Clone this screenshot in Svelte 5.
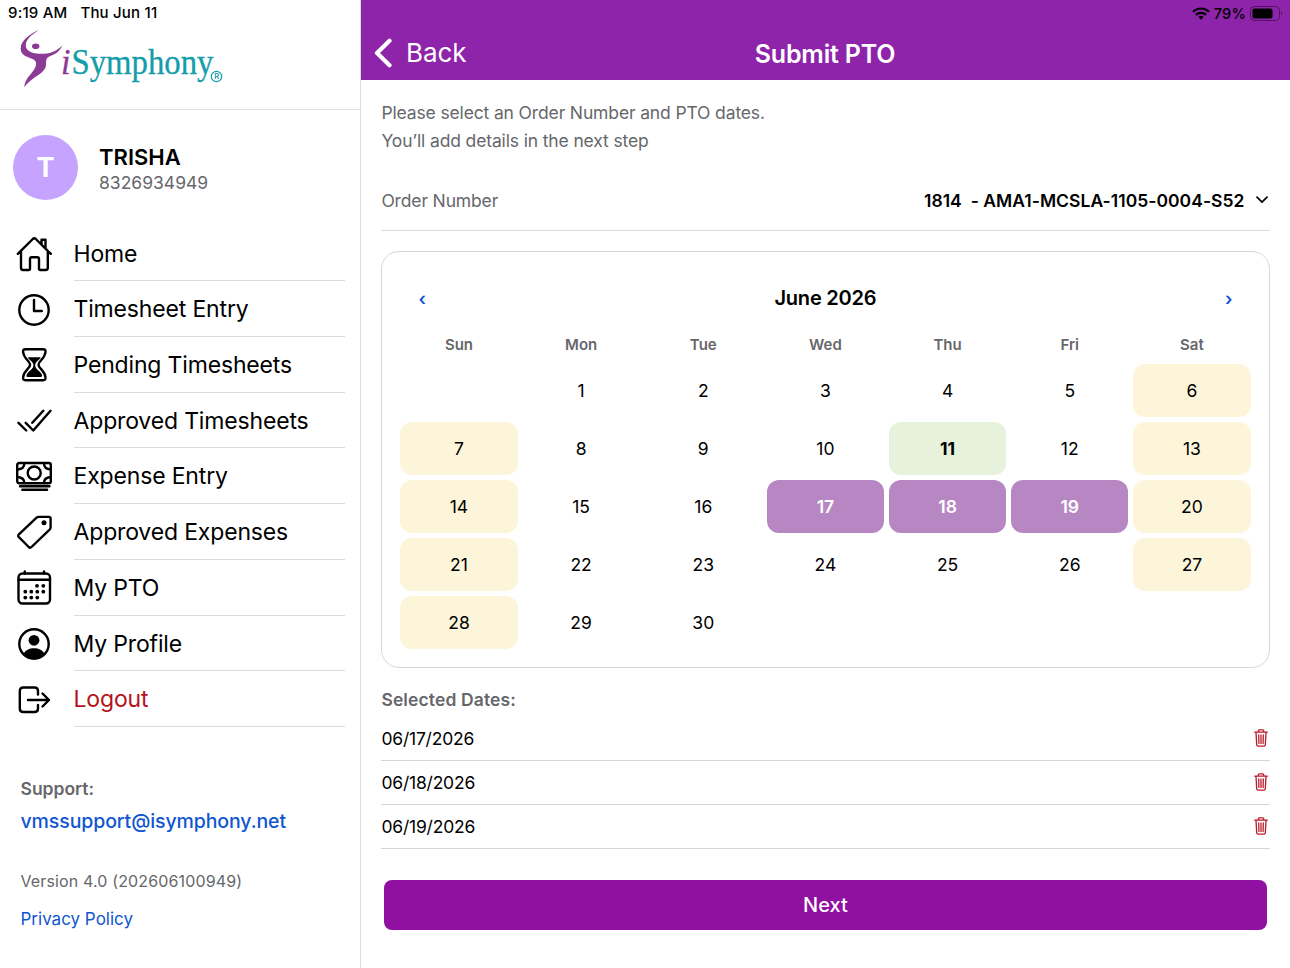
<!--
  Submit PTO – sidebar navigation, month calendar and selected dates.
-->
<script lang="ts">
  const menu = [
    { label: 'Home', icon: 'home' },
    { label: 'Timesheet Entry', icon: 'clock' },
    { label: 'Pending Timesheets', icon: 'hourglass' },
    { label: 'Approved Timesheets', icon: 'checks' },
    { label: 'Expense Entry', icon: 'cash' },
    { label: 'Approved Expenses', icon: 'tag' },
    { label: 'My PTO', icon: 'calendar' },
    { label: 'My Profile', icon: 'profile' },
    { label: 'Logout', icon: 'logout' },
  ];

  const weekdays = ['Sun', 'Mon', 'Tue', 'Wed', 'Thu', 'Fri', 'Sat'];
  const today = 11;
  const firstWeekday = 1;
  const days = Array.from({ length: 30 }, (_, i) => i + 1);

  let selected = $state([17, 18, 19]);

  function isWeekend(day: number) {
    const col = (day - 1 + firstWeekday) % 7;
    return col === 0 || col === 6;
  }

  function toggle(day: number) {
    if (isWeekend(day)) return;
    selected = selected.includes(day)
      ? selected.filter((d) => d !== day)
      : [...selected, day].sort((a, b) => a - b);
  }

  const format = (day: number) => `06/${String(day).padStart(2, '0')}/2026`;
</script>

<div class="app">
  <aside class="sidebar">
    <div class="brand">
      <div class="status"><span>9:19 AM</span><span>Thu Jun 11</span></div>
      <svg class="logo" width="204" height="60" viewBox="0 0 204 60">
        <path fill="#8b3a96" d="M19.3.8C9 5.5.7 12 .7 19.3c0 5 3 7 6.300 8.500 4 1.700 7.800 2.400 8.800 5.200 1 3-.6 6.300-3.300 9.800C9 47.500 4.800 51 4.300 58.300 6.500 55 9 53 12 50.500c5-4 10.500-6.500 13-11 2.300-4-.3-8.500 3-11.200C31 25.800 38 26 42.700 16c-5 5.500-11.200 8.300-18.500 8.800-8 .4-18-1-18.400-8C5.500 11 11 6 19.300.8z"/>
        <ellipse cx="15.700" cy="17.300" rx="3.700" ry="2.800" fill="#8b3a96"/>
        <text x="41" y="44.800" class="logo-i" textLength="9.500" lengthAdjust="spacingAndGlyphs">i</text>
        <text x="51.500" y="44.800" class="logo-name" textLength="142" lengthAdjust="spacingAndGlyphs">Symphony</text>
        <circle cx="196.500" cy="47.500" r="5.200" fill="#fff" stroke="#149daa" stroke-width="1.200"/>
        <text x="194.200" y="50.200" class="logo-r">R</text>
      </svg>
    </div>

    <div class="user">
      <div class="avatar">T</div>
      <div>
        <div class="name">TRISHA</div>
        <div class="phone">8326934949</div>
      </div>
    </div>

    <nav>
      {#each menu as item}
        <a class="item" class:logout={item.icon === 'logout'} href="#{item.icon}">
          <svg class="icon" width="36" height="36" viewBox="0 0 36 36">
            {#if item.icon === 'home'}
              <path d="M1.800 17.800 16.800 3q1.500-1.300 3 0l15 14.800M5 15v16.800Q5 34 7 34h5.800q1.200 0 1.200-1.500V23q0-1.800 1.800-1.800h5.400Q23 21.200 23 23v9.500q0 1.500 1.200 1.500h5.600q2 0 2-2.200V15M25.500 8V3.700h4v8.500"/>
            {:else if item.icon === 'clock'}
              <circle cx="18" cy="18" r="14.700"/>
              <path d="M18 8v11h7.800"/>
            {:else if item.icon === 'hourglass'}
              <path d="M9.500 2.200h17.600q2.800 0 2.400 2.800c-.7 7.200-7 8.800-7 12.700s6.300 5.500 7 12.700q.4 2.900-2.400 2.900H9.500q-2.800 0-2.400-2.900c.7-7.200 7-8.800 7-12.700S7.800 12.200 7.100 5q-.4-2.800 2.400-2.800z"/>
              <path class="solid" d="M12.800 10.300h11c.7 0 .9.600.4 1.200-2 2.300-5 3.700-5 6.500 0 4.200 4 5.300 6.200 8.700 1.500 2.400.5 3.300-.9 3.300H12.100c-1.400 0-2.400-.9-.9-3.300 2.200-3.400 6.200-4.500 6.200-8.700 0-2.800-3-4.200-5-6.500-.5-.6-.3-1.200.4-1.200z"/>
            {:else if item.icon === 'checks'}
              <path d="m2.500 19.800 7.700 7.700M9.700 19.800l7.600 7.700L34.500 7.800M16.300 19.800l11-12"/>
            {:else if item.icon === 'cash'}
              <rect x="1.200" y="4" width="33.600" height="20.200" rx="2"/>
              <circle cx="18.200" cy="14" r="6.500"/>
              <path d="M1.500 10.500Q8.300 10 8.300 4.500M28 4.500q0 5.500 6.700 6M1.500 18q6.800.5 6.800 6M28 24q0-5.500 6.700-6"/>
              <path d="M4 27.300h29.500M6.300 30.800h24.800"/>
            {:else if item.icon === 'tag'}
              <path d="M22.800 2.900h10q1.800 0 1.800 1.800v8.500q0 1.500-1 2.500L15.500 33q-1.400 1.300-2.800 0L2.900 23.200q-1.400-1.400 0-2.800L20.300 3.900q1-1 2.500-1z"/>
              <circle class="solid" cx="28" cy="8.800" r="2.500"/>
            {:else if item.icon === 'calendar'}
              <rect x="2.500" y="3.500" width="31.500" height="30" rx="4"/>
              <path d="M8.800 1.500v2M28 1.500v2M2.500 9.800H34"/>
              <g class="solid">
                {#each [[21, 15.8], [27.3, 15.8], [9.3, 21.7], [15.3, 21.7], [21.3, 21.7], [27.3, 21.7], [9.3, 27.6], [15.3, 27.6], [21.3, 27.6]] as [x, y]}
                  <circle cx={x} cy={y} r="1.900"/>
                {/each}
              </g>
            {:else if item.icon === 'profile'}
              <circle cx="18" cy="18" r="14.700"/>
              <circle class="solid" cx="18" cy="14.300" r="5.400"/>
              <path class="solid" d="M7.500 28c1.500-4 6-5.800 10.500-5.800S27 24 28.500 28C26 31 22 32.700 18 32.700S10 31 7.500 28z"/>
            {:else}
              <path d="M22 12.500V9q0-3.500-3.500-3.500H7.300Q3.800 5.500 3.800 9v17.500q0 3.500 3.500 3.500h11.200q3.500 0 3.500-3.500V23M12 18h21M26.500 11.500 33 18l-6.500 6.500"/>
            {/if}
          </svg>
          <span class="label">{item.label}</span>
        </a>
      {/each}
    </nav>

    <footer>
      <div class="support">Support:</div>
      <a class="mail" href="mailto:vmssupport@isymphony.net">vmssupport@isymphony.net</a>
      <div class="version">Version 4.0 (202606100949)</div>
      <a class="privacy" href="#privacy">Privacy Policy</a>
    </footer>
  </aside>

  <main>
    <header>
      <div class="device">
        <svg width="18" height="13" viewBox="0 0 18 13" fill="none" stroke="#000" stroke-width="2.200">
          <path d="M1 4.800a11.300 11.300 0 0 1 16 0M3.900 7.900a7.200 7.200 0 0 1 10.200 0"/>
          <path d="m9 12.700-2.500-2.600a3.500 3.500 0 0 1 5 0z" fill="#000" stroke="none"/>
        </svg>
        <span>79%</span>
        <svg width="34" height="15" viewBox="0 0 34 15">
          <rect x=".5" y=".5" width="29" height="14" rx="4" fill="none" stroke="#000" stroke-opacity=".42"/>
          <rect x="2.500" y="2.500" width="20" height="10" rx="2"/>
          <path d="M31 5.300q2.500 2.200 0 4.400z" opacity=".42"/>
        </svg>
      </div>
      <div class="bar">
        <button class="back">
          <svg width="18" height="30" viewBox="0 0 18 30" fill="none" stroke="#fff" stroke-width="4.200" stroke-linecap="round" stroke-linejoin="round">
            <path d="M15.500 2.700 3 15l12.500 12.300"/>
          </svg>
          <span>Back</span>
        </button>
        <h1>Submit PTO</h1>
      </div>
    </header>

    <div class="content">
      <p class="intro">Please select an Order Number and PTO dates.<br>You’ll add details in the next step</p>

      <div class="order">
        <span class="order-label">Order Number</span>
        <span class="order-value">1814 &nbsp;- AMA1-MCSLA-1105-0004-S52</span>
        <svg width="12" height="8" viewBox="0 0 12 8" fill="none" stroke="#000" stroke-width="1.700" stroke-linecap="round" stroke-linejoin="round">
          <path d="m1 1.200 5 5 5-5"/>
        </svg>
      </div>

      <section class="calendar">
        <div class="month">
          <button aria-label="Previous month">‹</button>
          <h2>June 2026</h2>
          <button aria-label="Next month">›</button>
        </div>
        <div class="weekdays">
          {#each weekdays as name}<span>{name}</span>{/each}
        </div>
        <div class="days">
          <span></span>
          {#each days as day}
            <button
              class="day"
              class:weekend={isWeekend(day)}
              class:today={day === today}
              class:selected={selected.includes(day)}
              onclick={() => toggle(day)}
            >{day}</button>
          {/each}
        </div>
      </section>

      <h3>Selected Dates:</h3>
      {#each selected as day (day)}
        <div class="date-row">
          <span>{format(day)}</span>
          <button aria-label="Remove date" onclick={() => toggle(day)}>
            <svg width="14" height="18" viewBox="0 0 14 18" fill="none" stroke="#b71c2c" stroke-width="1.300" stroke-linecap="round" stroke-linejoin="round">
              <path d="M.7 3.200h12.600M4.300 3V1.700q0-.9.900-.9h3.600q.9 0 .9.900V3M2 3.400l.7 12.400q.1 1.300 1.300 1.300h6q1.200 0 1.300-1.300L12 3.400M4.700 6l.2 8.500M7 6v8.500M9.300 6l-.2 8.500"/>
            </svg>
          </button>
        </div>
      {/each}

      <button class="next">Next</button>
    </div>
  </main>
</div>

<style>
  :global(body) { background: #fff; }

  .app {
    display: flex;
    height: 968px;
    overflow: hidden;
    font-family: Inter, Roboto, sans-serif;
    color: #000;
  }

  button {
    padding: 0;
    border: 0;
    background: none;
    font: inherit;
    color: inherit;
  }
  a { text-decoration: none; }
  h1, h2, h3, p { margin: 0; }
  svg { display: block; flex-shrink: 0; }

  .sidebar {
    box-sizing: border-box;
    width: 361px;
    flex-shrink: 0;
    border-right: 1px solid #dcdcdc;
  }

  .brand {
    box-sizing: border-box;
    height: 109.5px;
    border-bottom: 1px solid #dfdfdf;
  }
  .status {
    display: flex;
    gap: 13px;
    padding: 3px 0 0 8px;
    font-size: 15px;
    font-weight: 500;
    line-height: 20px;
    letter-spacing: 0.2px;
  }
  .logo { margin: 6px 0 0 20px; overflow: visible; }
  .logo-i, .logo-name {
    font-family: "Liberation Serif", serif;
    font-size: 35.5px;
    stroke-width: 0.3;
  }
  .logo-i { font-style: italic; fill: #8b3a96; stroke: #8b3a96; }
  .logo-name { fill: #149daa; stroke: #149daa; }
  .logo-r { font-size: 7.5px; font-weight: 600; fill: #149daa; }

  .user {
    display: flex;
    align-items: center;
    gap: 21px;
    height: 65px;
    padding: 25.5px 0 0 13px;
  }
  .avatar {
    width: 65px;
    height: 65px;
    border-radius: 50%;
    background: #c5a3ff;
    color: #fff;
    font-size: 27px;
    font-weight: 700;
    line-height: 66px;
    text-align: center;
  }
  .name { padding-top: 2px; font-size: 22px; font-weight: 600; line-height: 27px; }
  .phone { font-size: 17.5px; line-height: 23px; color: #66676b; }

  nav { padding-top: 25.5px; }
  .item {
    display: flex;
    align-items: center;
    gap: 21.5px;
    height: 55.72px;
    padding: 0 15px 0 16px;
    color: #000;
  }
  .label {
    flex: 1;
    box-sizing: border-box;
    height: 100%;
    border-bottom: 1px solid #dcdcdc;
    font-size: 23px;
    line-height: 56px;
    letter-spacing: -0.16px;
  }
  .logout .label { color: #b5121b; }
  .icon {
    margin-top: 1px;
    fill: none;
    stroke: #000;
    stroke-width: 2.4;
    stroke-linecap: round;
    stroke-linejoin: round;
  }
  .icon .solid { fill: #000; stroke: none; }

  footer {
    display: flex;
    flex-direction: column;
    padding: 49px 0 0 20.5px;
    color: #66676b;
  }
  footer a { color: #0f56cf; }
  .support { font-size: 17.5px; font-weight: 600; line-height: 26px; }
  .mail {
    margin-top: 6px;
    font-size: 19.5px;
    font-weight: 500;
    line-height: 26px;
    letter-spacing: -0.1px;
  }
  .version { margin-top: 36px; font-size: 16px; line-height: 22px; letter-spacing: 0.14px; }
  .privacy { margin-top: 15px; font-size: 17px; line-height: 24px; }

  main { flex: 1; }
  header {
    height: 80px;
    background: #8e24aa;
  }
  .device {
    display: flex;
    align-items: center;
    justify-content: flex-end;
    gap: 4px;
    height: 26px;
    padding-right: 6px;
    font-size: 14.5px;
    font-weight: 500;
    letter-spacing: 0.2px;
  }
  .bar {
    display: grid;
    grid-template-columns: 1fr auto 1fr;
    align-items: center;
    height: 54px;
    padding-left: 13px;
    padding-right: 14px;
    color: #fff;
  }
  .back {
    display: flex;
    align-items: center;
    gap: 14px;
    font-size: 26px;
    line-height: 30px;
    letter-spacing: -0.1px;
  }
  .back span { padding-bottom: 1px; }
  h1 {
    padding-top: 1px;
    font-size: 25px;
    font-weight: 600;
    letter-spacing: -0.2px;
  }

  .content { padding: 19px 20.5px 0 20.4px; }
  .intro {
    font-size: 17.5px;
    line-height: 27.8px;
    letter-spacing: -0.14px;
    color: #66676b;
  }
  .order {
    display: flex;
    align-items: center;
    box-sizing: border-box;
    height: 60px;
    margin-top: 16.4px;
    padding-right: 2px;
    border-bottom: 1.5px solid #dcdcdc;
    font-size: 17.5px;
  }
  .order-label { flex: 1; color: #66676b; letter-spacing: -0.15px; }
  .order-value { margin-right: 11px; font-weight: 600; letter-spacing: 0.04px; }

  .calendar {
    box-sizing: border-box;
    height: 417px;
    margin-top: 20px;
    padding: 32px 18px 0;
    border: 1.5px solid #d8d8d8;
    border-radius: 18px;
  }
  .month {
    display: flex;
    align-items: center;
    justify-content: space-between;
    height: 28px;
    padding: 0 18px;
  }
  .month button {
    padding-top: 2px;
    color: #0f56cf;
    font-size: 18px;
    font-weight: 600;
    line-height: 28px;
  }
  h2 { font-size: 20px; font-weight: 600; letter-spacing: -0.2px; }
  .weekdays, .days {
    display: grid;
    grid-template-columns: repeat(7, 1fr);
    column-gap: 5px;
  }
  .weekdays {
    margin: 22.5px 0 7.7px;
    font-size: 15px;
    font-weight: 600;
    line-height: 22px;
    color: #66676b;
    text-align: center;
  }
  .days { row-gap: 5.4px; grid-auto-rows: 52.6px; }
  .day {
    border-radius: 12px;
    font-size: 17.5px;
    text-align: center;
  }
  .weekend { background: #fdf5da; }
  .today { background: #e6f2db; font-weight: 700; }
  .selected { background: #b787c4; color: #fff; font-weight: 600; }

  h3 {
    margin-top: 19px;
    font-size: 17.5px;
    font-weight: 600;
    line-height: 26px;
    letter-spacing: 0.12px;
    color: #66676b;
  }
  .date-row {
    display: flex;
    align-items: center;
    justify-content: space-between;
    box-sizing: border-box;
    height: 44px;
    padding-right: 2px;
    border-bottom: 1.5px solid #d6d6d6;
    font-size: 17.5px;
    letter-spacing: -0.2px;
  }
  h3 + .date-row { margin-top: 4px; }

  .next {
    display: block;
    width: calc(100% - 5px);
    height: 50px;
    margin: 31px auto 0;
    border-radius: 8px;
    background: #9010a2;
    color: #fff;
    font-size: 20px;
    font-weight: 500;
  }
</style>
